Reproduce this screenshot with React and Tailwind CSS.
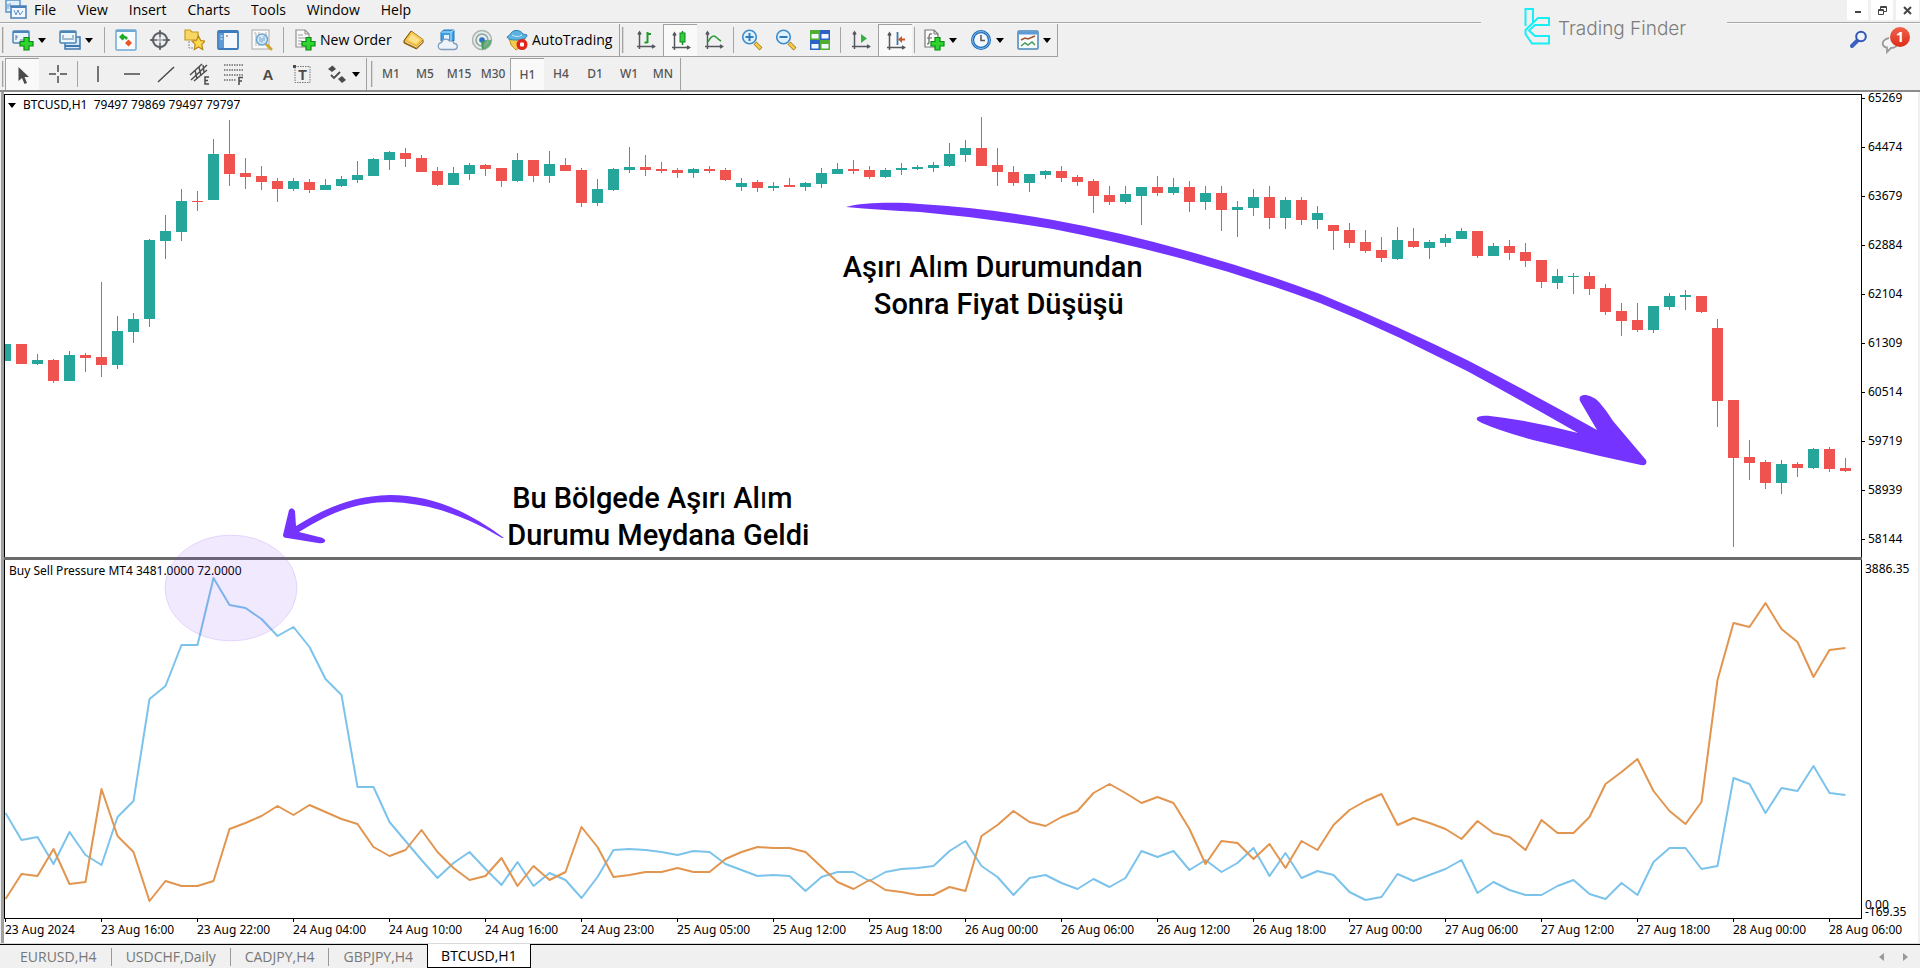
import React from 'react';

const UP = '#26a69a';
const DOWN = '#ef5350';
const STEP = 16;
const FIRST_X = 5.5;

// [direction, high, body top, body bottom, low] in chart units
const candles = [
  ['u', 344, 344, 361, 361], ['d', 344, 344, 364, 364], ['u', 354, 360, 364, 365], ['d', 359, 360, 381, 383],
  ['u', 351, 355, 381, 381], ['d', 353, 355, 358, 372], ['d', 282, 357, 365, 377], ['u', 316, 331, 365, 369],
  ['u', 313, 319, 332, 343], ['u', 239, 240, 319, 327], ['u', 215, 231, 241, 259], ['u', 189, 201, 232, 241],
  ['d', 191, 201, 202, 211], ['u', 139, 154, 200, 200], ['d', 120, 154, 174, 186], ['d', 158, 173, 177, 189],
  ['d', 166, 176, 182, 190], ['d', 178, 181, 189, 202], ['u', 178, 181, 189, 191], ['d', 179, 182, 190, 193],
  ['u', 179, 185, 190, 190], ['u', 176, 179, 186, 187], ['u', 161, 175, 180, 183], ['u', 158, 159, 176, 176],
  ['u', 151, 152, 160, 170], ['d', 148, 153, 159, 167], ['d', 155, 158, 172, 172], ['d', 167, 171, 185, 186],
  ['u', 167, 173, 185, 185], ['u', 163, 165, 174, 180], ['d', 164, 165, 169, 176], ['d', 168, 168, 181, 187],
  ['u', 153, 160, 181, 182], ['d', 160, 160, 176, 182], ['u', 151, 164, 176, 183], ['d', 158, 165, 171, 171],
  ['d', 168, 170, 203, 207], ['u', 179, 189, 203, 206], ['u', 168, 169, 190, 191], ['u', 147, 167, 170, 173],
  ['d', 155, 167, 170, 176], ['d', 162, 169, 171, 173], ['d', 168, 170, 173, 178], ['u', 168, 169, 173, 178],
  ['d', 166, 169, 171, 173], ['d', 168, 170, 180, 181], ['u', 178, 183, 187, 191], ['d', 180, 182, 188, 192],
  ['u', 182, 186, 188, 191], ['d', 178, 185, 187, 187], ['u', 182, 183, 187, 191], ['u', 168, 173, 184, 188],
  ['u', 163, 169, 174, 174], ['d', 160, 169, 171, 174], ['d', 166, 170, 177, 179], ['u', 168, 170, 177, 178],
  ['u', 163, 168, 170, 175], ['u', 165, 167, 169, 170], ['u', 162, 165, 168, 172], ['u', 143, 154, 166, 167],
  ['u', 140, 148, 155, 162], ['d', 117, 148, 166, 166], ['d', 148, 165, 172, 186], ['d', 166, 172, 183, 186],
  ['u', 174, 174, 183, 192], ['u', 170, 171, 175, 179], ['d', 166, 171, 178, 182], ['d', 175, 177, 182, 186],
  ['d', 179, 181, 196, 213], ['d', 186, 195, 202, 205], ['u', 186, 194, 202, 204], ['u', 187, 187, 196, 225],
  ['d', 176, 187, 193, 196], ['u', 178, 187, 193, 195], ['d', 181, 187, 202, 212], ['u', 186, 193, 202, 210],
  ['d', 186, 193, 210, 231], ['u', 201, 207, 210, 237], ['u', 189, 197, 208, 216], ['d', 186, 197, 218, 229],
  ['u', 197, 200, 218, 229], ['d', 197, 200, 220, 225], ['u', 206, 213, 220, 229], ['d', 225, 225, 231, 250],
  ['d', 223, 230, 243, 248], ['d', 230, 242, 251, 253], ['d', 237, 250, 258, 262], ['u', 227, 240, 259, 260],
  ['d', 228, 241, 247, 248], ['u', 240, 242, 248, 259], ['u', 234, 238, 243, 247], ['u', 228, 231, 239, 239],
  ['d', 231, 231, 256, 258], ['u', 243, 246, 256, 256], ['d', 240, 246, 253, 260], ['d', 243, 252, 261, 267],
  ['d', 260, 260, 282, 288], ['u', 269, 276, 283, 289], ['u', 273, 276, 277, 294], ['d', 272, 276, 289, 295],
  ['d', 284, 288, 312, 315], ['d', 303, 311, 321, 336], ['d', 303, 320, 330, 332], ['u', 306, 306, 330, 333],
  ['u', 293, 296, 307, 310], ['u', 290, 295, 297, 310], ['d', 296, 296, 312, 313], ['d', 319, 328, 401, 427],
  ['d', 400, 400, 458, 547], ['d', 440, 457, 463, 480], ['d', 460, 462, 483, 489], ['u', 460, 464, 483, 494],
  ['d', 462, 464, 468, 477], ['u', 448, 449, 468, 469], ['d', 447, 449, 469, 472], ['d', 458, 468, 471, 472],
];

const buyPressure = [
  813, 840, 837, 864, 832, 855, 865, 817, 801, 699, 686, 645, 645, 578, 605, 608, 619, 636, 627, 647,
  679, 695, 787, 787, 822, 841, 860, 878, 863, 852, 869, 885, 862, 886, 873, 880, 898, 877, 850, 849,
  850, 852, 855, 851, 852, 864, 870, 876, 875, 876, 891, 877, 872, 872, 881, 872, 869, 868, 866, 851,
  841, 866, 877, 895, 878, 875, 883, 889, 879, 887, 878, 851, 857, 851, 870, 860, 872, 863, 848, 876,
  853, 878, 871, 875, 892, 900, 897, 874, 881, 875, 869, 860, 893, 882, 890, 895, 895, 886, 880, 894,
  899, 883, 895, 862, 848, 848, 869, 866, 778, 784, 813, 788, 791, 766, 793, 795,
];

const sellPressure = [
  899, 874, 876, 849, 884, 882, 789, 836, 852, 901, 881, 886, 886, 881, 829, 823, 816, 806, 815, 805,
  812, 819, 824, 847, 856, 850, 830, 852, 868, 880, 876, 858, 886, 866, 880, 872, 827, 847, 877, 875,
  872, 872, 868, 872, 872, 859, 852, 847, 848, 848, 852, 867, 882, 889, 880, 890, 892, 895, 895, 887,
  891, 836, 825, 811, 822, 826, 817, 811, 793, 784, 793, 803, 797, 803, 829, 864, 841, 843, 859, 844,
  868, 841, 850, 825, 810, 801, 794, 825, 818, 823, 829, 839, 821, 833, 837, 850, 820, 833, 833, 817,
  784, 772, 759, 791, 811, 824, 802, 680, 623, 627, 603, 629, 642, 677, 650, 648,
];

const prices = ['65269', '64474', '63679', '62884', '62104', '61309', '60514', '59719', '58939', '58144'];

const times = [
  '23 Aug 2024', '23 Aug 16:00', '23 Aug 22:00', '24 Aug 04:00', '24 Aug 10:00', '24 Aug 16:00', '24 Aug 23:00',
  '25 Aug 05:00', '25 Aug 12:00', '25 Aug 18:00', '26 Aug 00:00', '26 Aug 06:00', '26 Aug 12:00', '26 Aug 18:00',
  '27 Aug 00:00', '27 Aug 06:00', '27 Aug 12:00', '27 Aug 18:00', '28 Aug 00:00', '28 Aug 06:00',
];

const menus = ['File', 'View', 'Insert', 'Charts', 'Tools', 'Window', 'Help'];
const frames = ['M1', 'M5', 'M15', 'M30', 'H1', 'H4', 'D1', 'W1', 'MN'];
const tabs = ['EURUSD,H4', 'USDCHF,Daily', 'CADJPY,H4', 'GBPJPY,H4', 'BTCUSD,H1'];

const toPoints = (ys) => ys.map((y, i) => `${FIRST_X + i * STEP},${y}`).join(' ');

/* ---------- icons ---------- */

function Svg({ children }) {
  return (
    <svg width="22" height="22" viewBox="0 0 22 22" fill="none" className="shrink-0" aria-hidden="true">
      {children}
    </svg>
  );
}

const Plus = () => (
  <path d="M12 8.500h5v4h4v4.500h-4v4h-5v-4H8v-4.500h4z" fill="#2fd42f" stroke="#0a8a12" strokeWidth="1.200" />
);

const NewChartIcon = () => (
  <Svg>
    <rect x="1" y="2" width="16" height="12" rx="1" fill="#eaf4fc" stroke="#4a86b8" strokeWidth="1.500" />
    <path d="M1 3h16" stroke="#4a86b8" strokeWidth="2" />
    <path d="M4 6v5M4 8h2M8 11h6" stroke="#5b7f9c" />
    <Plus />
  </Svg>
);

const ProfilesIcon = () => (
  <Svg>
    <path d="M6 8h15v12H6z" fill="#d6e9f8" stroke="#3f78ad" strokeWidth="1.500" />
    <path d="M6 17h15" stroke="#3f78ad" strokeWidth="2" />
    <rect x="1" y="2" width="16" height="12" rx="1" fill="#eef7fd" stroke="#4a86b8" strokeWidth="1.500" />
    <path d="M1 3h16" stroke="#4a86b8" strokeWidth="2" />
    <path d="M4 6v5M14 6v5M5 10h8" stroke="#5b7f9c" />
  </Svg>
);

const MarketIcon = () => (
  <Svg>
    <rect x="1" y="1" width="20" height="20" rx="1" fill="#f8fcff" stroke="#6fa9d6" strokeWidth="1.500" />
    <path d="M1 2h20" stroke="#6fa9d6" strokeWidth="2" />
    <path d="M4 8l3.500-3.500L11 8l-3.500 3.500z" fill="#1faa2a" />
    <path d="M9 8l2-1 2 2-2 2z" fill="#1faa2a" />
    <path d="M10 14l3.500-3.500L17 14l-3.500 3.500z" fill="#ee5522" />
  </Svg>
);

const DataIcon = () => (
  <Svg>
    <circle cx="11" cy="11" r="7" stroke="#5e6266" strokeWidth="2" />
    <path d="M11 1v20M1 11h20" stroke="#5e6266" strokeWidth="1.500" />
    <path d="M11 1l-2 3h4zM11 21l-2-3h4zM1 11l3-2v4zM21 11l-3-2v4z" fill="#5e6266" />
    <rect x="8" y="8" width="6" height="6" fill="#f0f0f0" opacity="0.500" />
  </Svg>
);

const NavigatorIcon = () => (
  <Svg>
    <path d="M2 1h5l2 2h6v8H2z" fill="#f7d665" stroke="#c79a24" strokeWidth="1.200" />
    <path d="M6 12v7h6" stroke="#8a8a8a" strokeDasharray="2 1" />
    <path d="M15.500 7l2.200 4.500 4.300.6-3.200 3.300.9 5.100-4.200-2.500-4.200 2.500.9-5.100L9 12.100l4.400-.6z" fill="#ffd84a" stroke="#b8861b" strokeWidth="1.200" />
  </Svg>
);

const TerminalIcon = () => (
  <Svg>
    <rect x="1" y="2" width="20" height="18" rx="1" fill="#f4f9fd" stroke="#3d7cba" strokeWidth="1.800" />
    <path d="M1 3h20" stroke="#3d7cba" strokeWidth="2" />
    <rect x="2" y="4" width="5" height="15" fill="#5c9ad6" />
    <path d="M3.500 7h2M3.500 10h2" stroke="#fff" />
    <path d="M9 7h2" stroke="#666" />
  </Svg>
);

const TesterIcon = () => (
  <Svg>
    <rect x="1" y="1" width="17" height="19" fill="#fafafa" stroke="#a8a8a8" />
    <path d="M3 4h2v13M8 3v14M15 3v14" stroke="#b2b2b2" />
    <path d="M16 16l4 4" stroke="#d0a52c" strokeWidth="3" strokeLinecap="round" />
    <circle cx="11" cy="10.500" r="5.500" fill="#d5ebfa" stroke="#6ea3cf" strokeWidth="1.500" />
    <path d="M9 8v5M11 9v5M13 7v5" stroke="#6ea3cf" />
  </Svg>
);

const OrderIcon = () => (
  <Svg>
    <path d="M2 1h9l4 4v13H2z" fill="#fafafa" stroke="#8f8f8f" strokeWidth="1.200" />
    <path d="M11 1v4h4" stroke="#8f8f8f" />
    <path d="M4 6h5M4 9h7M4 12h4M4 15h4" stroke="#9c9c9c" strokeWidth="1.200" />
    <Plus />
  </Svg>
);

const EditorIcon = () => (
  <Svg>
    <path d="M1 11.500L8 2l12 8.500v3L13.500 20 1 14z" fill="#b97c12" stroke="#7e540c" />
    <path d="M2 11.500L8.500 2.500 20 10.500l-6.500 6.500z" fill="#f6c84c" />
    <path d="M5 11l4-6 8 6-4 4z" fill="#fde08a" />
    <path d="M2 12.500l11.500 5.500 6-5.500" stroke="#fff2c0" />
  </Svg>
);

const CloudIcon = () => (
  <Svg>
    <path d="M4 3l3-2h10v11H4z" fill="#3ba0e6" stroke="#2078bd" />
    <path d="M4 3h10v9M14 3l3-2" stroke="#bfe2fa" />
    <path d="M7 6h5v4H7z" fill="#e4f4fe" />
    <path d="M5 20.500a3.500 3.500 0 01-.5-7A4.500 4.500 0 0112.500 12a3.500 3.500 0 014.500 2.500 3 3 0 01.5 6z" fill="#eef3fa" stroke="#7f9cc0" strokeWidth="1.300" />
  </Svg>
);

const SignalIcon = () => (
  <Svg>
    <circle cx="11" cy="11" r="9.500" fill="#e5ece8" stroke="#a9b4ae" strokeWidth="1.500" />
    <path d="M11 11h9.500A9.500 9.500 0 0111 20.500z" fill="#5fb070" />
    <circle cx="11" cy="11" r="6" stroke="#8ea5ab" strokeWidth="1.600" />
    <circle cx="11" cy="11" r="2.800" fill="#2f6fc4" />
    <path d="M10 12h2.500v8H11z" fill="#3f9a55" />
  </Svg>
);

const AutoTradingIcon = () => (
  <Svg>
    <path d="M3 9h16l-3 8-6 4-5-5z" fill="#f3cc4d" stroke="#be9120" />
    <path d="M1 8c3-1 4-6 8-6.500S16 3 17 5l4 1c0 4-6 5-10 5S2 11 1 8z" fill="#5cb2e0" stroke="#2f82b5" />
    <path d="M6 6c3 2 7 2 10 0" stroke="#d0ecfa" />
    <circle cx="16" cy="15.500" r="5.500" fill="#e0261c" />
    <rect x="14" y="13.500" width="4" height="4" rx="1" fill="#fff" />
  </Svg>
);

const Axes = () => (
  <g stroke="#55595d" strokeWidth="1.500">
    <path d="M4.500 3v17M2 17.500h17" />
    <path d="M3 5.500l1.500-2.500L6 5.500M17 16l2.500 1.500L17 19" />
  </g>
);

const BarsIcon = () => (
  <Svg>
    <Axes />
    <path d="M12.500 3v11M12.500 5H16M9.500 13.500h3" stroke="#1e9a2a" strokeWidth="2" />
  </Svg>
);

const CandleIcon = () => (
  <Svg>
    <Axes />
    <path d="M12.500 1v14" stroke="#16851f" strokeWidth="1.500" />
    <rect x="10" y="3" width="5" height="9" fill="#2fd03c" stroke="#16851f" />
  </Svg>
);

const LineIcon = () => (
  <Svg>
    <Axes />
    <path d="M5 13c2-4 4-6 6-6s3 3 7 5" stroke="#2b9a36" strokeWidth="1.500" />
  </Svg>
);

const Lens = ({ plus }) => (
  <Svg>
    <path d="M14 14l6 6" stroke="#a97c17" strokeWidth="4" />
    <path d="M14.500 14.500l5 5" stroke="#f2cd4a" strokeWidth="2.500" />
    <circle cx="8.500" cy="8" r="6.800" fill="#dff1fc" stroke="#3f8bc8" strokeWidth="1.600" />
    <path d={plus ? 'M4.500 8h8M8.500 4v8' : 'M4.500 8h8'} stroke="#2d7dbf" strokeWidth="2" />
  </Svg>
);

const TilesIcon = () => (
  <Svg>
    <path d="M1 1h10v10H1zM11 11h10v10H11z" fill="#4fae2f" />
    <path d="M11 1h10v10H11zM1 11h10v10H1z" fill="#2a62c8" />
    <path d="M2.500 5h7v4.500h-7zM12.500 5h7v4.500h-7zM2.500 15h7v4.500h-7zM12.500 15h7v4.500h-7z" fill="#f1f7ff" />
  </Svg>
);

const ScrollIcon = () => (
  <Svg>
    <Axes />
    <path d="M11 5l6 4.500-6 4.500z" fill="#35b044" />
  </Svg>
);

const ShiftIcon = () => (
  <Svg>
    <Axes />
    <path d="M12.500 2v13" stroke="#3c78a8" strokeWidth="1.800" />
    <path d="M13 9.500l4-3.500v2.500h3v2h-3V13z" fill="#c9562a" />
  </Svg>
);

const IndicatorsIcon = () => (
  <Svg>
    <path d="M2 1h9l4 4v13H2z" fill="#fafafa" stroke="#777" strokeWidth="1.200" />
    <path d="M11 1v4h4" stroke="#777" />
    <path d="M9 5c-3-1-3 2-3 4v4c0 2-1 2-2 2M4 9h5" stroke="#666" strokeWidth="1.200" />
    <Plus />
  </Svg>
);

const ClockIcon = () => (
  <Svg>
    <circle cx="11" cy="11" r="10" fill="#1f6cb8" />
    <circle cx="11" cy="11" r="8.500" stroke="#7fbdec" />
    <circle cx="11" cy="11" r="6.800" fill="#f2f8fd" />
    <path d="M11 6v5.500h4" stroke="#555" strokeWidth="1.500" />
  </Svg>
);

const TemplateIcon = () => (
  <Svg>
    <rect x="1" y="2" width="20" height="18" rx="1" fill="#f7fbfe" stroke="#4a86b8" strokeWidth="1.500" />
    <path d="M1 4h20" stroke="#5c9ad6" strokeWidth="3" />
    <path d="M4 11l4-2 3 1 7-3" stroke="#a2512f" strokeWidth="1.500" />
    <path d="M4 17l4-3 3 2 4-3 3 3" stroke="#4a9a55" strokeWidth="1.500" />
  </Svg>
);

const CursorIcon = () => (
  <Svg>
    <path d="M6.500 3v14l3.500-3 2.500 6 2.500-1-2.500-6H17z" fill="#4b4b4b" />
  </Svg>
);

const CrosshairIcon = () => (
  <Svg>
    <path d="M13 2v7M13 13v7M4 11h7M15 11h7" stroke="#4b4b4b" strokeWidth="1.500" />
  </Svg>
);

const VLineIcon = () => <Svg><path d="M11 3v16" stroke="#4b4b4b" strokeWidth="1.500" /></Svg>;
const HLineIcon = () => <Svg><path d="M3 11h16" stroke="#4b4b4b" strokeWidth="1.500" /></Svg>;
const TrendIcon = () => <Svg><path d="M3 19L19 4" stroke="#4b4b4b" strokeWidth="1.500" /></Svg>;

const ChannelIcon = () => (
  <Svg>
    <path d="M1 12L13 1M2 17L18 2M5 18L18 7M6 7l2 9M10 4l2 9M14 2l1 7" stroke="#4b4b4b" strokeWidth="1.400" />
    <path d="M20 14h-4v7h4M16 17.500h3" stroke="#4b4b4b" strokeWidth="1.500" />
  </Svg>
);

const FiboIcon = () => (
  <Svg>
    <path d="M1 2h19M1 7h19M1 12h19M1 17h12" stroke="#6a6a6a" strokeWidth="1.500" strokeDasharray="1.500 1" />
    <path d="M20 14.500h-4V22M16 18h3" stroke="#4b4b4b" strokeWidth="1.500" />
  </Svg>
);

const TextIcon = () => (
  <Svg>
    <text x="11" y="17" textAnchor="middle" fontSize="15" fontWeight="700" fill="#4b4b4b" fontFamily="Liberation Sans, sans-serif">A</text>
  </Svg>
);

const LabelIcon = () => (
  <Svg>
    <rect x="4" y="3.500" width="15" height="16" stroke="#777" strokeDasharray="1.500 1" />
    <path d="M2 2h3v3H2z" fill="#4b4b4b" />
    <text x="11.500" y="17" textAnchor="middle" fontSize="14" fontWeight="700" fill="#4b4b4b" fontFamily="Liberation Sans, sans-serif">T</text>
  </Svg>
);

const ArrowsIcon = () => (
  <Svg>
    <path d="M2 6l4.500-3.500L10 6 6 9z" fill="#4b4b4b" />
    <path d="M5 12l3 3 6-6" stroke="#4b4b4b" strokeWidth="1.800" />
    <path d="M12 16l4-3 4 4-4 3z" fill="#4b4b4b" />
  </Svg>
);

const AppIcon = () => (
  <Svg>
    <rect x="1" y="0" width="14" height="12" fill="#e3effa" stroke="#5a94cc" strokeWidth="1.500" />
    <path d="M3 4v5M5 3v4" stroke="#5a94cc" />
    <rect x="6" y="6" width="15" height="12" fill="#f2f8fd" stroke="#4a80b8" strokeWidth="1.500" />
    <path d="M6 7h15" stroke="#4a80b8" strokeWidth="2" />
    <path d="M9 10l2 5 2-5 2 5 3-4" stroke="#5a94cc" />
  </Svg>
);

/* ---------- toolbar parts ---------- */

const Caret = () => <span className="h-0 w-0 border-x-4 border-t-[5px] border-x-transparent border-t-black" />;

const Grip = () => <span className="my-[3px] mr-px ml-[2px] w-[2px] border-l border-[#a0a0a0] bg-[#d8d8d8]" />;

function Divider({ className }) {
  return (
    <span className={`flex justify-center py-[3px] ${className}`}>
      <span className="w-px bg-[#a6a6a6]" />
    </span>
  );
}

function ToolButton({ label, pressed, children }) {
  return (
    <button
      type="button"
      aria-label={label}
      aria-pressed={pressed}
      className={`flex w-[34px] shrink-0 items-center justify-center ${pressed ? 'border-t border-l border-[#a0a0a0] bg-[#f9f9f9]' : ''}`}
    >
      {children}
    </button>
  );
}

function MenuButton({ label, children }) {
  return (
    <button type="button" aria-label={label} className="flex w-[47px] shrink-0 items-center gap-1 pl-[7px]">
      {children}
      <Caret />
    </button>
  );
}

function MainToolbar() {
  return (
    <div className="flex h-[33px] w-fit border-r border-b border-[#a0a0a0]">
      <Grip />
      <MenuButton label="New chart"><NewChartIcon /></MenuButton>
      <MenuButton label="Profiles"><ProfilesIcon /></MenuButton>
      <Divider className="w-[10px]" />
      <ToolButton label="Market Watch"><MarketIcon /></ToolButton>
      <ToolButton label="Data Window"><DataIcon /></ToolButton>
      <ToolButton label="Navigator"><NavigatorIcon /></ToolButton>
      <ToolButton label="Terminal"><TerminalIcon /></ToolButton>
      <ToolButton label="Strategy Tester"><TesterIcon /></ToolButton>
      <Divider className="w-2" />
      <button type="button" className="flex w-[110px] shrink-0 items-center gap-1 pl-[7px] whitespace-nowrap">
        <OrderIcon />
        New Order
      </button>
      <ToolButton label="MetaEditor"><EditorIcon /></ToolButton>
      <ToolButton label="VPS"><CloudIcon /></ToolButton>
      <ToolButton label="Signals"><SignalIcon /></ToolButton>
      <button type="button" className="flex w-[117px] shrink-0 items-center gap-1 pl-[7px] whitespace-nowrap">
        <AutoTradingIcon />
        AutoTrading
      </button>
      <span className="w-1 border-r border-[#a0a0a0]" />
      <Grip />
      <span className="w-1" />
      <ToolButton label="Bar Chart"><BarsIcon /></ToolButton>
      <ToolButton label="Candlesticks" pressed><CandleIcon /></ToolButton>
      <ToolButton label="Line Chart"><LineIcon /></ToolButton>
      <Divider className="w-1" />
      <ToolButton label="Zoom In"><Lens plus /></ToolButton>
      <ToolButton label="Zoom Out"><Lens /></ToolButton>
      <ToolButton label="Tile Windows"><TilesIcon /></ToolButton>
      <Divider className="w-[7px]" />
      <ToolButton label="Auto Scroll"><ScrollIcon /></ToolButton>
      <ToolButton label="Chart Shift" pressed><ShiftIcon /></ToolButton>
      <Divider className="w-1" />
      <MenuButton label="Indicators"><IndicatorsIcon /></MenuButton>
      <MenuButton label="Periods"><ClockIcon /></MenuButton>
      <MenuButton label="Templates"><TemplateIcon /></MenuButton>
    </div>
  );
}

function DrawToolbar() {
  return (
    <div className="mt-px flex h-8 w-fit border-r border-[#a0a0a0]">
      <Grip />
      <ToolButton label="Cursor" pressed><CursorIcon /></ToolButton>
      <ToolButton label="Crosshair"><CrosshairIcon /></ToolButton>
      <Divider className="w-2" />
      <ToolButton label="Vertical line"><VLineIcon /></ToolButton>
      <ToolButton label="Horizontal line"><HLineIcon /></ToolButton>
      <ToolButton label="Trendline"><TrendIcon /></ToolButton>
      <ToolButton label="Equidistant channel"><ChannelIcon /></ToolButton>
      <ToolButton label="Fibonacci"><FiboIcon /></ToolButton>
      <ToolButton label="Text"><TextIcon /></ToolButton>
      <ToolButton label="Text label"><LabelIcon /></ToolButton>
      <MenuButton label="Arrows"><ArrowsIcon /></MenuButton>
      <span className="w-px bg-[#a0a0a0]" />
      <span className="w-[2px]" />
      <Grip />
      {frames.map((f) => (
        <ToolButton key={f} label={f} pressed={f === 'H1'}>
          <span className="font-['Noto_Sans',sans-serif] text-[12px] font-medium text-[#555]">{f}</span>
        </ToolButton>
      ))}
    </div>
  );
}

function Brand() {
  return (
    <a href="#" className="absolute top-0 right-[193px] flex h-[46px] w-[246px] gap-2 bg-[#f0f0f0] pt-2 pl-[43px]">
      <svg width="26" height="37" viewBox="0 0 26 37" fill="none" stroke="#17eef5" strokeWidth="2" className="shrink-0">
        <path d="M1.500 18V1H9v13" />
        <path d="M25 10H14L1.500 22v4L8 35.500h17V28H11l-6-5.500L11 17h14z" />
      </svg>
      <span className="pt-[9px] font-['Inter',sans-serif] text-[19px] leading-6 font-light whitespace-nowrap text-[#7c7c7c]">
        Trading Finder
      </span>
    </a>
  );
}

function Header() {
  return (
    <header className="relative">
      <div className="flex h-[23px] justify-between border-b border-[#a8a8a8]">
        <nav className="flex items-center gap-[21px] pb-[2px] pl-[5px]">
          <span className="-mr-[14px] flex h-5 items-start overflow-hidden"><AppIcon /></span>
          {menus.map((m) => (
            <button key={m} type="button">{m}</button>
          ))}
        </nav>
        <div className="flex h-5 gap-[3px] pr-px">
          <button type="button" aria-label="Minimize" className="flex w-[21px] items-center justify-center bg-white">
            <span className="mt-1 h-[2px] w-[6px] bg-[#444]" />
          </button>
          <button type="button" aria-label="Restore" className="flex w-[22px] items-center justify-center bg-white">
            <svg width="9" height="9" viewBox="0 0 9 9" fill="none" stroke="#444"><path d="M2.500 3V.5h6v5H6M.5 3.500h5v5h-5zM2.500 1.500h6M.5 4.500h5" /></svg>
          </button>
          <button type="button" aria-label="Close" className="flex w-[23px] items-center justify-center bg-white">
            <svg width="9" height="9" viewBox="0 0 9 9" stroke="#444" strokeWidth="2"><path d="M1 1l7 7M8 1L1 8" /></svg>
          </button>
        </div>
      </div>
      <div className="flex justify-between border-t border-[#fafafa]">
        <div>
          <MainToolbar />
          <DrawToolbar />
        </div>
        <div className="flex items-start gap-3 pt-[5px] pr-[10px]">
          <button type="button" aria-label="Search">
            <svg width="20" height="20" viewBox="0 0 20 20" fill="none">
              <path d="M9 11l-6 6" stroke="#3b62c0" strokeWidth="4" strokeLinecap="round" />
              <circle cx="12" cy="7.500" r="4.800" fill="#eef3fd" stroke="#3355b5" strokeWidth="2" />
            </svg>
          </button>
          <button type="button" aria-label="Notifications" className="relative h-[22px] w-[29px]">
            <svg width="20" height="22" viewBox="0 0 20 22" fill="none" className="mt-[3px]">
              <path d="M8 6c-5 1-7 4-6 7 1 2 3 2.500 4 2.500V20l4-4c5 0 7-3 8-6" fill="#f5f5f5" stroke="#9b9b9b" strokeWidth="1.800" />
            </svg>
            <span className="absolute -top-[2px] right-0 flex h-5 w-5 items-center justify-center rounded-full bg-gradient-to-b from-[#f0604a] to-[#dc2a14] font-bold text-white">
              1
            </span>
          </button>
        </div>
      </div>
      <Brand />
    </header>
  );
}

/* ---------- charts ---------- */

function PricePane() {
  return (
    <section className="col-start-1 row-start-1 grid border-x border-t border-black">
      <svg viewBox="5 95 1856 462" preserveAspectRatio="none" className="col-start-1 row-start-1 h-full min-h-0 w-full">
        {candles.map(([dir, high, top, bottom, low], i) => {
          const x = FIRST_X + i * STEP;
          const color = dir === 'u' ? UP : DOWN;
          return (
            <g key={i} fill={color}>
              <rect x={x - 0.5} y={high} width="1" height={Math.max(low - high, 1)} />
              <rect x={x - 5.5} y={top} width="11" height={Math.max(bottom - top, 1)} />
            </g>
          );
        })}
      </svg>
      <h2 className="col-start-1 row-start-1 flex h-5 items-center gap-[7px] pl-[3px] whitespace-pre">
        <Caret />
        {'BTCUSD,H1  79497 79869 79497 79797'}
      </h2>
    </section>
  );
}

function PressurePane() {
  return (
    <section className="col-start-1 row-start-3 grid border-x border-b border-black">
      <svg viewBox="5 560 1856 358" preserveAspectRatio="none" fill="none" strokeWidth="2" strokeLinejoin="round" className="col-start-1 row-start-1 h-full min-h-0 w-full">
        <polyline points={toPoints(buyPressure)} stroke="#7cc3ec" />
        <polyline points={toPoints(sellPressure)} stroke="#e2954f" />
      </svg>
      <h2 className="col-start-1 row-start-1 h-[22px] pl-1 leading-[22px]">Buy Sell Pressure MT4 3481.0000 72.0000</h2>
    </section>
  );
}

function Annotations() {
  return (
    <div className="pointer-events-none relative col-start-1 row-span-3 row-start-1 min-h-0 font-['Roboto',sans-serif] text-[29px] leading-[37px] font-medium">
      <svg viewBox="4 94 1858 825" preserveAspectRatio="none" className="absolute inset-0 h-full w-full" fill="#7433ff">
        <ellipse cx="231" cy="588" rx="66" ry="53" fill="#7c3aed" fillOpacity="0.110" stroke="#7c3aed" strokeOpacity="0.150" />
        {/* falling price */}
        <path d="M846 207C862 202 900 202 920 204Q987 208 1053 220Q1120 232 1187 251Q1253 269 1320 294Q1400 327 1467 360Q1533 394 1597 430L1580 401C1577 393 1590 393 1599 402Q1607 411 1613 421L1646 460Q1648 466 1641 465L1600 456L1533 440Q1500 431 1482 423C1472 419 1477 415 1490 416Q1533 421 1578 433Q1533 407 1467 371L1400 338Q1360 319 1320 303Q1253 278 1187 260Q1120 242 1053 229Q987 218 920 212Q880 210 846 207Z" />
        {/* overbought zone */}
        <path d="M504 538C468 511 431 495 390 495C350 496 322 510 296 526L295 511Q292 506 289 510L283 535Q283 538 287 538L318 543Q326 544 325 540Q324 538 319 537L299 532C325 516 352 502 390 502C431 503 467 517 502 538Z" />
      </svg>
      <p className="absolute top-[155px] left-[53%] -translate-x-1/2 pl-5 text-center whitespace-nowrap">
        <span className="block pr-3">Aşır<span className="font-normal">ı</span> Al<span className="font-normal">ı</span>m Durumundan</span>
        Sonra Fiyat Düşüşü
      </p>
      <p className="absolute top-[386px] left-[35%] -translate-x-1/2 pl-2 text-center whitespace-nowrap">
        <span className="block pr-3">Bu Bölgede Aşır<span className="font-normal">ı</span> Al<span className="font-normal">ı</span>m</span>
        Durumu Meydana Geldi
      </p>
    </div>
  );
}

function PriceScale() {
  return (
    <>
      <ul className="col-start-2 row-start-1 -mt-[3px] flex flex-col justify-between pb-[11px] leading-[14px]">
        {prices.map((p) => (
          <li key={p} className="flex items-center gap-[3px]">
            <span className="h-px w-[3px] bg-black" />
            {p}
          </li>
        ))}
      </ul>
      <ul className="col-start-2 row-start-3 flex flex-col pt-[2px] pl-[3px] leading-[14px]">
        <li>3886.35</li>
        <li className="mt-auto -mb-[7px]">0.00</li>
        <li>-169.35</li>
      </ul>
    </>
  );
}

function Chart() {
  return (
    <main className="flex min-h-0 flex-1 flex-col border-t-2 border-[#8c8c8c] bg-[#f0f0f0] pl-px font-['Noto_Sans',sans-serif] text-[12px]">
      <div className="flex min-h-0 flex-1 flex-col border-r-2 border-l-[3px] border-r-[#f0f0f0] border-l-[#a0a0a0] bg-white pt-[2px]">
        <div className="grid min-h-0 flex-1 grid-cols-[minmax(0,1fr)_56px] grid-rows-[minmax(0,463fr)_3px_minmax(0,359fr)] whitespace-nowrap">
          <PricePane />
          <div className="col-start-1 row-start-2 bg-[#6b6b6b]" />
          <PressurePane />
          <Annotations />
          <PriceScale />
        </div>
        <ol className="-mr-[7px] ml-px grid h-6 grid-cols-20 whitespace-nowrap">
          {times.map((t) => (
            <li key={t}>
              <span className="block h-[3px] w-px bg-black" />
              <span className="block leading-[15px]">{t}</span>
            </li>
          ))}
        </ol>
      </div>
    </main>
  );
}

function ChartTabs() {
  return (
    <footer className="flex h-[25px] border-t border-[#d9d9d9] text-[#777]">
      <div role="tablist" className="flex">
        {tabs.map((t, i) => {
          const active = i === tabs.length - 1;
          return (
            <button
              key={t}
              type="button"
              role="tab"
              aria-selected={active}
              className={
                active
                  ? 'border-x border-b border-black bg-white px-[13px] text-black'
                  : 'flex items-center border-t border-black'
              }
            >
              {active ? t : (
                <span className={`px-[14px] leading-[18px] ${i === 0 ? 'pl-[20px]' : ''} ${i < 3 ? 'border-r border-[#999]' : ''}`}>{t}</span>
              )}
            </button>
          );
        })}
      </div>
      <div className="flex flex-1 items-center justify-end gap-[19px] border-t border-black pr-3">
        <button type="button" aria-label="Previous" className="h-0 w-0 border-y-4 border-r-[5px] border-y-transparent border-r-[#999]" />
        <button type="button" aria-label="Next" className="h-0 w-0 border-y-4 border-l-[5px] border-y-transparent border-l-[#999]" />
      </div>
    </footer>
  );
}

export default function App() {
  return (
    <div className="flex h-screen flex-col overflow-hidden bg-[#f0f0f0] font-['Open_Sans',sans-serif] text-[14px] leading-5 text-black">
      <Header />
      <Chart />
      <ChartTabs />
    </div>
  );
}
